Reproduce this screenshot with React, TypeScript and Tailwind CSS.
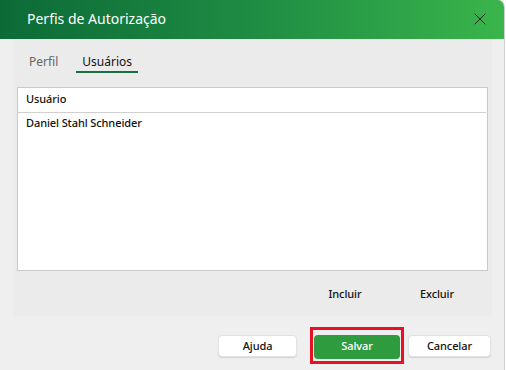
import { X } from "lucide-react";

const font = { fontFamily: '"Segoe UI", "Noto Sans", "Open Sans", sans-serif' };

function Btn({ label, className = "" }: { label: string; className?: string }) {
  return (
    <button
      className={
        "h-[22px] rounded-[4px] bg-white text-[11px] font-medium tracking-[-0.1px] text-[#111] shadow-[0_1px_1px_rgba(0,0,0,0.12)] border border-[#e2e2e2] " +
        className
      }
    >
      {label}
    </button>
  );
}

export default function App() {
  return (
    <div className="w-[506px] h-[370px] bg-white" style={font}>
      <div className="w-[505px] h-[370px] flex flex-col bg-[#efefef] border-r border-[#d2d2d2] rounded-tr-[7px] overflow-hidden">
        {/* title bar */}
        <div className="h-[39px] shrink-0 flex items-center justify-between pl-[27px] pr-[14px] bg-gradient-to-r from-[#0c6a37] via-[#1e8c43] to-[#3ab54b]">
          <span className="text-white text-[14px] leading-none -mt-[1px]">Perfis de Autorização</span>
          <X size={20} strokeWidth={1.15} className="text-[#1a1a1a] -mt-[1px]" />
        </div>

        {/* main panel */}
        <div className="ml-[13px] w-[479px] h-[277px] bg-[#ebebeb] flex flex-col">
          <div className="flex items-end h-[34px] pl-[10px] gap-[12px]">
            <div className="px-[6px] pb-[2px] text-[12px] text-[#666]">Perfil</div>
            <div className="px-[6px] text-[12px] text-[#111] border-b-2 border-[#15703f]">Usuários</div>
          </div>

          <div className="ml-[4px] mt-[14px] w-[471px] h-[186px] bg-white border border-[#c9c9c9]">
            <div className="h-[25px] flex items-center pl-[8px] text-[11px] font-medium tracking-[-0.1px] text-[#111] border-b border-[#d0d0d0] mr-[1px]">
              Usuário
            </div>
            <div className="h-[21px] flex items-center pl-[8px] text-[11px] font-medium tracking-[-0.1px] text-[#111]">
              Daniel Stahl Schneider
            </div>
          </div>

          <div className="flex justify-end items-center h-[46px] pt-[2px] pr-[15px] text-[11px] font-medium tracking-[-0.1px] text-[#111]">
            <div className="w-[80px] text-center">Incluir</div>
            <div className="w-[12px]" />
            <div className="w-[80px] text-center">Excluir</div>
          </div>
        </div>

        {/* footer */}
        <div className="flex-1 flex items-center justify-end pr-[13px] pt-[5px]">
          <Btn label="Ajuda" className="w-[79px] mt-[1px]" />
          <div className="ml-[13px] border-[3px] border-[#e81123] px-[1px] py-[2px]">
            <button className="w-[86px] h-[24px] rounded-[4px] bg-[#2f9b3f] text-white text-[11px] font-medium tracking-[-0.1px]">
              Salvar
            </button>
          </div>
          <Btn label="Cancelar" className="w-[83px] ml-[4px] mt-[1px]" />
        </div>
      </div>
    </div>
  );
}
